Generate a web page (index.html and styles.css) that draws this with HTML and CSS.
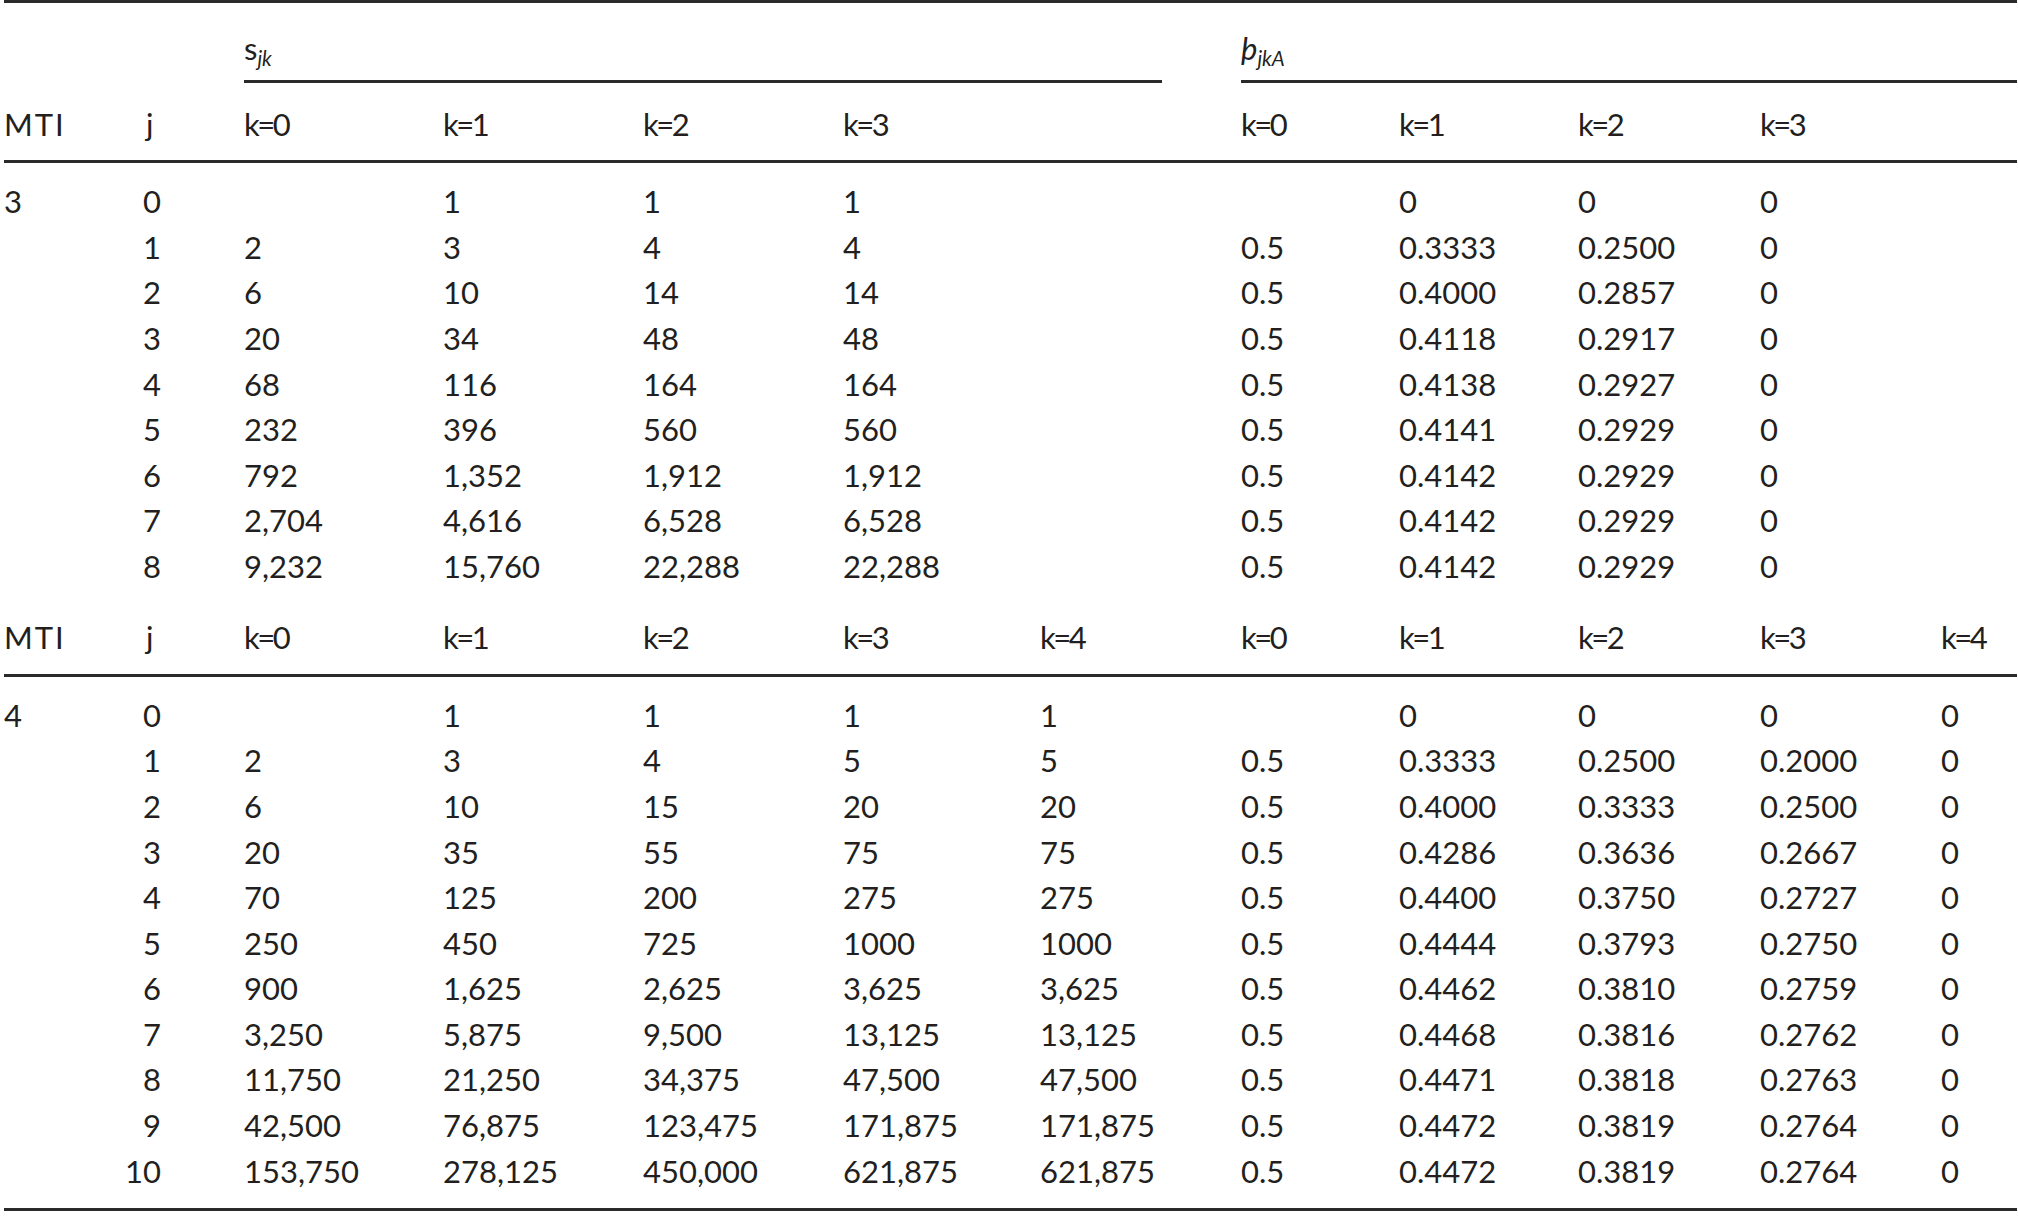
FILE: index.html
```html
<!DOCTYPE html>
<html lang="en">
<head>
<meta charset="utf-8">
<title>Table</title>
<link rel="stylesheet" href="styles.css">
</head>
<body>
<table class="tbl">
  <colgroup>
    <col class="c-mti"><col class="c-j">
    <col class="c-s0"><col class="c-s1"><col class="c-s2"><col class="c-s3"><col class="c-s4">
    <col class="c-p0"><col class="c-p1"><col class="c-p2"><col class="c-p3"><col class="c-p4">
  </colgroup>
  <thead>
    <tr class="grp">
      <th></th><th></th>
      <th colspan="5"><div class="grp-label grp-s">s<span class="sub">jk</span></div></th>
      <th colspan="5"><div class="grp-label grp-p"><span class="it">þ</span><span class="sub">jkA</span></div></th>
    </tr>
    <tr class="head">
      <th class="mti">MTI</th><th class="j">j</th>
      <th>k=0</th><th>k=1</th><th>k=2</th><th>k=3</th><th></th>
      <th>k=0</th><th>k=1</th><th>k=2</th><th>k=3</th><th></th>
    </tr>
  </thead>
  <tbody>
    <tr class="first"><td>3</td><td class="j">0</td><td></td><td>1</td><td>1</td><td>1</td><td></td><td></td><td>0</td><td>0</td><td>0</td><td></td></tr>
    <tr><td></td><td class="j">1</td><td>2</td><td>3</td><td>4</td><td>4</td><td></td><td>0.5</td><td>0.3333</td><td>0.2500</td><td>0</td><td></td></tr>
    <tr><td></td><td class="j">2</td><td>6</td><td>10</td><td>14</td><td>14</td><td></td><td>0.5</td><td>0.4000</td><td>0.2857</td><td>0</td><td></td></tr>
    <tr><td></td><td class="j">3</td><td>20</td><td>34</td><td>48</td><td>48</td><td></td><td>0.5</td><td>0.4118</td><td>0.2917</td><td>0</td><td></td></tr>
    <tr><td></td><td class="j">4</td><td>68</td><td>116</td><td>164</td><td>164</td><td></td><td>0.5</td><td>0.4138</td><td>0.2927</td><td>0</td><td></td></tr>
    <tr><td></td><td class="j">5</td><td>232</td><td>396</td><td>560</td><td>560</td><td></td><td>0.5</td><td>0.4141</td><td>0.2929</td><td>0</td><td></td></tr>
    <tr><td></td><td class="j">6</td><td>792</td><td>1,352</td><td>1,912</td><td>1,912</td><td></td><td>0.5</td><td>0.4142</td><td>0.2929</td><td>0</td><td></td></tr>
    <tr><td></td><td class="j">7</td><td>2,704</td><td>4,616</td><td>6,528</td><td>6,528</td><td></td><td>0.5</td><td>0.4142</td><td>0.2929</td><td>0</td><td></td></tr>
    <tr><td></td><td class="j">8</td><td>9,232</td><td>15,760</td><td>22,288</td><td>22,288</td><td></td><td>0.5</td><td>0.4142</td><td>0.2929</td><td>0</td><td></td></tr>
  </tbody>
  <tbody>
    <tr class="head head2">
      <th class="mti">MTI</th><th class="j">j</th>
      <th>k=0</th><th>k=1</th><th>k=2</th><th>k=3</th><th>k=4</th>
      <th>k=0</th><th>k=1</th><th>k=2</th><th>k=3</th><th>k=4</th>
    </tr>
    <tr class="first"><td>4</td><td class="j">0</td><td></td><td>1</td><td>1</td><td>1</td><td>1</td><td></td><td>0</td><td>0</td><td>0</td><td>0</td></tr>
    <tr><td></td><td class="j">1</td><td>2</td><td>3</td><td>4</td><td>5</td><td>5</td><td>0.5</td><td>0.3333</td><td>0.2500</td><td>0.2000</td><td>0</td></tr>
    <tr><td></td><td class="j">2</td><td>6</td><td>10</td><td>15</td><td>20</td><td>20</td><td>0.5</td><td>0.4000</td><td>0.3333</td><td>0.2500</td><td>0</td></tr>
    <tr><td></td><td class="j">3</td><td>20</td><td>35</td><td>55</td><td>75</td><td>75</td><td>0.5</td><td>0.4286</td><td>0.3636</td><td>0.2667</td><td>0</td></tr>
    <tr><td></td><td class="j">4</td><td>70</td><td>125</td><td>200</td><td>275</td><td>275</td><td>0.5</td><td>0.4400</td><td>0.3750</td><td>0.2727</td><td>0</td></tr>
    <tr><td></td><td class="j">5</td><td>250</td><td>450</td><td>725</td><td>1000</td><td>1000</td><td>0.5</td><td>0.4444</td><td>0.3793</td><td>0.2750</td><td>0</td></tr>
    <tr><td></td><td class="j">6</td><td>900</td><td>1,625</td><td>2,625</td><td>3,625</td><td>3,625</td><td>0.5</td><td>0.4462</td><td>0.3810</td><td>0.2759</td><td>0</td></tr>
    <tr><td></td><td class="j">7</td><td>3,250</td><td>5,875</td><td>9,500</td><td>13,125</td><td>13,125</td><td>0.5</td><td>0.4468</td><td>0.3816</td><td>0.2762</td><td>0</td></tr>
    <tr><td></td><td class="j">8</td><td>11,750</td><td>21,250</td><td>34,375</td><td>47,500</td><td>47,500</td><td>0.5</td><td>0.4471</td><td>0.3818</td><td>0.2763</td><td>0</td></tr>
    <tr><td></td><td class="j">9</td><td>42,500</td><td>76,875</td><td>123,475</td><td>171,875</td><td>171,875</td><td>0.5</td><td>0.4472</td><td>0.3819</td><td>0.2764</td><td>0</td></tr>
    <tr class="last"><td></td><td class="j">10</td><td>153,750</td><td>278,125</td><td>450,000</td><td>621,875</td><td>621,875</td><td>0.5</td><td>0.4472</td><td>0.3819</td><td>0.2764</td><td>0</td></tr>
  </tbody>
</table>
</body>
</html>
```

FILE: styles.css
```css
html, body {
  margin: 0;
  padding: 0;
  background: #ffffff;
  overflow: hidden;
}

body {
  font-family: Lato, "Open Sans", sans-serif;
  font-size: 31px;
  color: #231f20;
}

.tbl {
  margin-left: 4px;
  width: 2013px;
  table-layout: fixed;
  border-collapse: collapse;
  border-top: 3px solid #2a2a2a;
  border-bottom: 3px solid #2a2a2a;
}

.c-mti { width: 100px; }
.c-j { width: 140px; }
.c-s0 { width: 199px; }
.c-s1 { width: 200px; }
.c-s2 { width: 200px; }
.c-s3 { width: 197px; }
.c-s4 { width: 201px; }
.c-p0 { width: 158px; }
.c-p1 { width: 179px; }
.c-p2 { width: 182px; }
.c-p3 { width: 181px; }
.c-p4 { width: 76px; }

.tbl th,
.tbl td {
  padding: 0;
  font-weight: 400;
  text-align: left;
  white-space: nowrap;
  line-height: 45.6px;
  vertical-align: top;
  overflow: visible;
}

.grp th {
  padding: 0;
}

.grp-label {
  padding-top: 23px;
  padding-bottom: 8px;
  line-height: 45.6px;
  border-bottom: 3px solid #2a2a2a;
}

.grp-s {
  margin-right: 79px;
}

.it {
  font-style: italic;
}

.sub {
  font-style: italic;
  font-size: 0.66em;
  line-height: 0;
  vertical-align: -0.3em;
}

.head th {
  padding-top: 19px;
  padding-bottom: 13px;
  letter-spacing: -2.5px;
}

.tbl .head th.mti {
  letter-spacing: 2px;
}

.head {
  border-bottom: 3px solid #2a2a2a;
}

.head2 th {
  padding-top: 25.6px;
}

.tbl .head th.j {
  text-align: right;
  padding-right: 93px;
}

.tbl td.j {
  text-align: right;
  padding-right: 83px;
}

.first td {
  padding-top: 16px;
}

.last td {
  padding-bottom: 14px;
}
```
